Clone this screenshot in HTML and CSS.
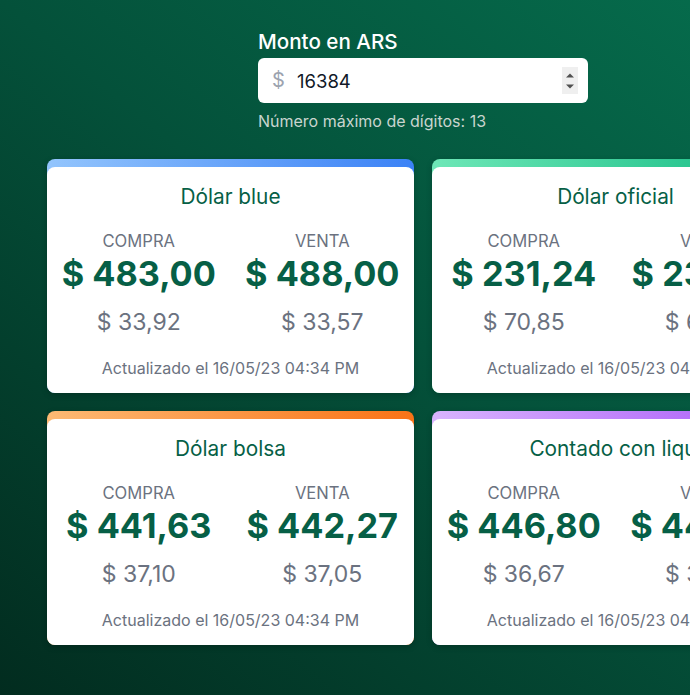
FILE: index.html
```html
<!DOCTYPE html>
<html lang="es">
<head>
<meta charset="utf-8">
<title>Cotizaciones</title>
<link rel="stylesheet" href="styles.css">
</head>
<body>
<main class="page">
  <section class="amount">
    <label class="amount-label" for="monto">Monto en ARS</label>
    <div class="amount-field">
      <span class="amount-prefix">$</span>
      <input id="monto" class="amount-input" type="number" value="16384">
      <span class="amount-spin" aria-hidden="true">
        <svg width="16" height="27" viewBox="0 0 16 27"><path d="M4 10.5 L8 6.5 L12 10.5 Z" fill="#505050"/><path d="M4 17.5 L12 17.5 L8 21.5 Z" fill="#505050"/></svg>
      </span>
    </div>
    <p class="amount-help">Número máximo de dígitos: 13</p>
  </section>

  <section class="cards">
    <article class="card card-blue">
      <div class="card-body">
        <h2 class="card-title">Dólar blue</h2>
        <div class="quotes">
          <div class="quote"><span class="quote-label">Compra</span><span class="quote-price">$ 483,00</span><span class="quote-conv">$ 33,92</span></div>
          <div class="quote"><span class="quote-label">Venta</span><span class="quote-price">$ 488,00</span><span class="quote-conv">$ 33,57</span></div>
        </div>
        <p class="card-updated">Actualizado el 16/05/23 04:34 PM</p>
      </div>
    </article>

    <article class="card card-green">
      <div class="card-body">
        <h2 class="card-title">Dólar oficial</h2>
        <div class="quotes">
          <div class="quote"><span class="quote-label">Compra</span><span class="quote-price">$ 231,24</span><span class="quote-conv">$ 70,85</span></div>
          <div class="quote"><span class="quote-label">Venta</span><span class="quote-price">$ 239,24</span><span class="quote-conv">$ 68,48</span></div>
        </div>
        <p class="card-updated">Actualizado el 16/05/23 04:34 PM</p>
      </div>
    </article>

    <article class="card card-orange">
      <div class="card-body">
        <h2 class="card-title">Dólar bolsa</h2>
        <div class="quotes">
          <div class="quote"><span class="quote-label">Compra</span><span class="quote-price">$ 441,63</span><span class="quote-conv">$ 37,10</span></div>
          <div class="quote"><span class="quote-label">Venta</span><span class="quote-price">$ 442,27</span><span class="quote-conv">$ 37,05</span></div>
        </div>
        <p class="card-updated">Actualizado el 16/05/23 04:34 PM</p>
      </div>
    </article>

    <article class="card card-purple">
      <div class="card-body">
        <h2 class="card-title">Contado con liqui</h2>
        <div class="quotes">
          <div class="quote"><span class="quote-label">Compra</span><span class="quote-price">$ 446,80</span><span class="quote-conv">$ 36,67</span></div>
          <div class="quote"><span class="quote-label">Venta</span><span class="quote-price">$ 449,80</span><span class="quote-conv">$ 36,43</span></div>
        </div>
        <p class="card-updated">Actualizado el 16/05/23 04:34 PM</p>
      </div>
    </article>
  </section>
</main>
</body>
</html>
```

FILE: styles.css
```css
* { box-sizing: border-box; }

html, body {
  margin: 0;
  padding: 0;
  overflow: hidden;
}

body {
  font-family: Inter, "Noto Sans", "Liberation Sans", sans-serif;
  background: #04523b;
}

.page {
  width: 846px;
  min-height: 695px;
  padding: 29px 47px 50px;
  background: linear-gradient(to top right, #022c1f 0%, #04513a 50%, #06704f 100%);
  display: flex;
  flex-direction: column;
  align-items: center;
}

.amount {
  width: 330px;
  display: flex;
  flex-direction: column;
}

.amount-label {
  color: #ffffff;
  font-size: 20.6px;
  font-weight: 500;
  line-height: 26px;
  margin-bottom: 3px;
}

.amount-field {
  position: relative;
  height: 45px;
}

.amount-prefix {
  position: absolute;
  left: 14px;
  top: 0;
  line-height: 45px;
  font-size: 20px;
  color: #9ca3af;
  pointer-events: none;
}

.amount-spin {
  position: absolute;
  left: 304px;
  top: 9px;
  width: 16px;
  height: 27px;
  background: #efefef;
  display: flex;
  pointer-events: none;
}

.amount-input {
  width: 100%;
  height: 45px;
  border: none;
  border-radius: 6px;
  background: #ffffff;
  padding: 0 10px 0 39px;
  font-family: Inter, "Noto Sans", sans-serif;
  font-size: 18.5px;
  color: #111827;
  outline: none;
  -moz-appearance: textfield;
}

.amount-input::-webkit-inner-spin-button,
.amount-input::-webkit-outer-spin-button {
  -webkit-appearance: none;
  margin: 0;
}

.amount-help {
  margin: 8px 0 0;
  font-size: 16px;
  line-height: 20px;
  color: #c9d5cf;
}

.cards {
  align-self: stretch;
  margin-top: 28px;
  display: grid;
  grid-template-columns: 367px 367px;
  gap: 18px;
}

.card {
  border-radius: 8px;
  padding-top: 8px;
  box-shadow: 0 2px 6px rgba(0, 0, 0, 0.2);
}

.card-blue { background: linear-gradient(to right, #93c5fd, #3b82f6); }
.card-green { background: linear-gradient(to right, #6ee7b7, #10b981); }
.card-orange { background: linear-gradient(to right, #fdba74, #f97316); }
.card-purple { background: linear-gradient(to right, #d8b4fe, #a855f7); }

.card-body {
  background: #ffffff;
  border-radius: 8px;
  padding: 16px 0 15px;
  text-align: center;
}

.card-title {
  margin: 0;
  font-size: 20.8px;
  font-weight: 400;
  line-height: 28px;
  color: #065f46;
}

.quotes {
  margin-top: 20px;
  display: grid;
  grid-template-columns: 1fr 1fr;
}

.quote {
  display: flex;
  flex-direction: column;
  align-items: center;
}

.quote-label {
  font-size: 16.6px;
  line-height: 20px;
  text-transform: uppercase;
  color: #6b7280;
}

.quote-price {
  margin-top: 1px;
  font-size: 34.3px;
  font-weight: 700;
  line-height: 44px;
  color: #065f46;
}

.quote-conv {
  margin-top: 10px;
  font-size: 23px;
  line-height: 32px;
  color: #6b7280;
}

.card-updated {
  margin: 20px 0 0;
  font-size: 16px;
  line-height: 20px;
  color: #6b7280;
}
```
